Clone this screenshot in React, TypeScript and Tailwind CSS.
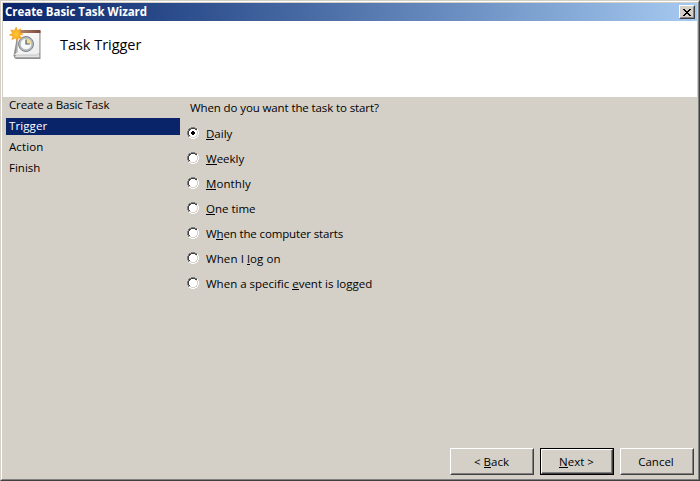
import React from "react";

const steps = [
  { label: "Create a Basic Task", track: "tracking-[-0.12px]" },
  { label: "Trigger", track: "tracking-[0.1px]" },
  { label: "Action", track: "tracking-[0.1px]" },
  { label: "Finish", track: "tracking-[0px]" },
];

const options = [
  { pre: "", key: "D", post: "aily", track: "tracking-[0px]" },
  { pre: "", key: "W", post: "eekly", track: "tracking-[0px]" },
  { pre: "", key: "M", post: "onthly", track: "tracking-[0.1px]" },
  { pre: "", key: "O", post: "ne time", track: "tracking-[0px]" },
  { pre: "W", key: "h", post: "en the computer starts", track: "tracking-[-0.14px]" },
  { pre: "When I ", key: "l", post: "og on", track: "tracking-[0.1px]" },
  { pre: "When a specific ", key: "e", post: "vent is logged", track: "tracking-[0px]" },
];

function Key({ children }: { children: React.ReactNode }) {
  return <span className="inline-block h-[13px] border-b border-black leading-[14px]">{children}</span>;
}

function Radio({ checked }: { checked: boolean }) {
  return (
    <svg width="12" height="12" viewBox="0 0 12 12" shapeRendering="crispEdges" className="shrink-0">
      <path fill="#fff" d="M4 2h4v1h1v1h1v4H9v1H8v1H4V9H3V8H2V4h1V3h1z" />
      <path fill="#808080" d="M4 0h4v1H4zM2 1h2v1H2zM8 1h2v1H8zM1 2h1v2H1zM0 4h1v4H0zM1 8h1v2H1z" />
      <path fill="#404040" d="M4 1h4v1H4zM2 2h2v1H2zM8 2h2v1H8zM2 3h1v1H2zM1 4h1v4H1zM2 8h1v1H2z" />
      <path fill="#fff" d="M10 2h1v2h-1zM11 4h1v4h-1zM10 8h1v2h-1zM8 10h2v1H8zM4 11h4v1H4zM2 10h2v1H2z" />
      <path fill="#d4d0c8" d="M9 3h1v1H9zM10 4h1v4h-1zM9 8h1v1H9zM8 9h2v1H8zM4 10h4v1H4zM2 9h2v1H2z" />
      {checked && <path fill="#000" d="M5 4h2v1h1v2H7v1H5V7H4V5h1z" />}
    </svg>
  );
}

function TaskIcon() {
  return (
    <svg width="36" height="34" viewBox="0 0 36 34">
      <defs>
        <linearGradient id="sheet" x1="0" y1="0" x2="1" y2="1">
          <stop offset="0" stopColor="#ffffff" />
          <stop offset="1" stopColor="#ececec" />
        </linearGradient>
        <linearGradient id="bar" x1="0" y1="0" x2="1" y2="0">
          <stop offset="0" stopColor="#b98a76" />
          <stop offset="1" stopColor="#7d4938" />
        </linearGradient>
        <radialGradient id="spark">
          <stop offset="0" stopColor="#ffc832" />
          <stop offset="1" stopColor="#f5a01a" />
        </radialGradient>
      </defs>
      <path d="M9 5h22.500v28H6.500L4.500 30z" fill="#8f8f8f" />
      <path d="M9 5h21.500v26.500H5.500l1.500-3z" fill="#e4e4e4" stroke="#909090" strokeWidth=".5" />
      <path d="M8.500 5h22v21.500L28.500 29H4.500l4-3z" fill="url(#sheet)" stroke="#a0a0a0" strokeWidth=".5" />
      <path d="M9 4h22.500v3H9z" fill="url(#bar)" />
      <circle cx="17" cy="18" r="7.500" fill="#b4babf" stroke="#7c8389" strokeWidth="1" />
      <circle cx="17" cy="18" r="5.700" fill="#f8f9f9" stroke="#a4abb1" strokeWidth=".6" />
      <path d="M17 18v-5.300a5.300 5.300 0 0 1 5.300 5.300z" fill="#f5dc90" />
      <path d="M17 13.500V18h3.800" fill="none" stroke="#46607a" strokeWidth="1.2" />
      <path d="m7.200 1 1.200 3.700 3.500-2-1 3.700 3.300 1.800-3.500 1 2 3.500-3.500-.7-.8 3.200-2-3.100-3.600 1.600 1.100-3.600L.3 9 3.500 7.300 1.700 3.900l3.600.7z" fill="url(#spark)" stroke="#f0991c" strokeWidth=".5" />
    </svg>
  );
}

const raised = "border border-t-white border-l-white border-r-[#404040] border-b-[#404040]";
const inner = "flex h-full w-full items-center justify-center border border-t-[#d4d0c8] border-l-[#d4d0c8] border-r-[#808080] border-b-[#808080] bg-[#d4d0c8]";

export default function App() {
  return (
    <div className="h-[481px] w-[700px] overflow-hidden border border-t-[#d4d0c8] border-r-[#404040] border-b-[#404040] border-l-[#d4d0c8] bg-[#d4d0c8] font-['Open_Sans','Noto_Sans',sans-serif] text-[11.5px] text-black">
      <div className="flex h-full flex-col border border-t-white border-r-[#808080] border-b-[#808080] border-l-white px-px pt-px">
        <header className="flex h-[18px] shrink-0 items-center justify-between bg-linear-to-r from-[#0a246a] to-[#a6caf0] pr-[2px] pl-[2px] text-white">
          <h1 className="text-[11.5px] leading-[18px] font-bold tracking-[-0.04px] whitespace-nowrap">Create Basic Task Wizard</h1>
          <button aria-label="Close" className={`h-[14px] w-[16px] ${raised}`}>
            <span className={inner}>
              <svg width="8" height="7" viewBox="0 0 8 7" shapeRendering="crispEdges">
                <path d="M0 0h2v1h1v1h2V1h1V0h2v1H7v1H6v1H5v1h1v1h1v1h1v1H6V6H5V5H3v1H2v1H0V6h1V5h1V4h1V3H2V2H1V1H0z" />
              </svg>
            </span>
          </button>
        </header>
        <section className="flex h-[76px] shrink-0 items-start bg-white pt-[5px] pl-[6px]">
          <TaskIcon />
          <h2 className="mt-[8px] ml-[15px] text-[14.5px] leading-[22px] tracking-[-0.03px] whitespace-nowrap">Task Trigger</h2>
        </section>
        <main className="flex flex-1">
          <nav className="w-[177px] shrink-0 pl-[3px]">
            {steps.map((s, i) => (
              <div key={s.label} className={`flex h-[21px] items-start whitespace-nowrap ${s.track}`}>
                <div className={`h-[17px] w-[174px] pl-[3px] leading-[16px] ${i === 1 ? "bg-[#0a246a] text-white" : ""}`}>{s.label}</div>
              </div>
            ))}
          </nav>
          <section className="flex-1 pt-[3px] pl-[7px]">
            <p className="h-[20px] pl-[3px] leading-[16px] tracking-[-0.11px] whitespace-nowrap">When do you want the task to start?</p>
            {options.map((o, i) => (
              <label key={o.key} className="flex h-[25px] items-center">
                <Radio checked={i === 0} />
                <span className={`mt-[2px] ml-[7px] leading-[16px] whitespace-pre ${o.track}`}>
                  {o.pre}<Key>{o.key}</Key>{o.post}
                </span>
              </label>
            ))}
          </section>
        </main>
        <footer className="flex h-[31px] shrink-0 justify-end pr-[3px]">
          <button className={`mr-[6px] h-[27px] w-[84px] ${raised}`}>
            <span className={`${inner} pr-[1px]`}><span className="leading-[16px] whitespace-pre">{"< "}<Key>B</Key>ack</span></span>
          </button>
          <button className="mr-[6px] h-[27px] w-[74px] border border-black">
            <span className="block h-full w-full border border-t-white border-l-white border-r-[#404040] border-b-[#404040]">
              <span className="flex h-full w-full items-center justify-center border-r border-b border-[#808080] bg-[#d4d0c8] pt-px"><span className="leading-[16px] whitespace-pre"><Key>N</Key>{"ext >"}</span></span>
            </span>
          </button>
          <button className={`h-[27px] w-[74px] ${raised}`}>
            <span className={`${inner} pr-[2px]`}>Cancel</span>
          </button>
        </footer>
      </div>
    </div>
  );
}
